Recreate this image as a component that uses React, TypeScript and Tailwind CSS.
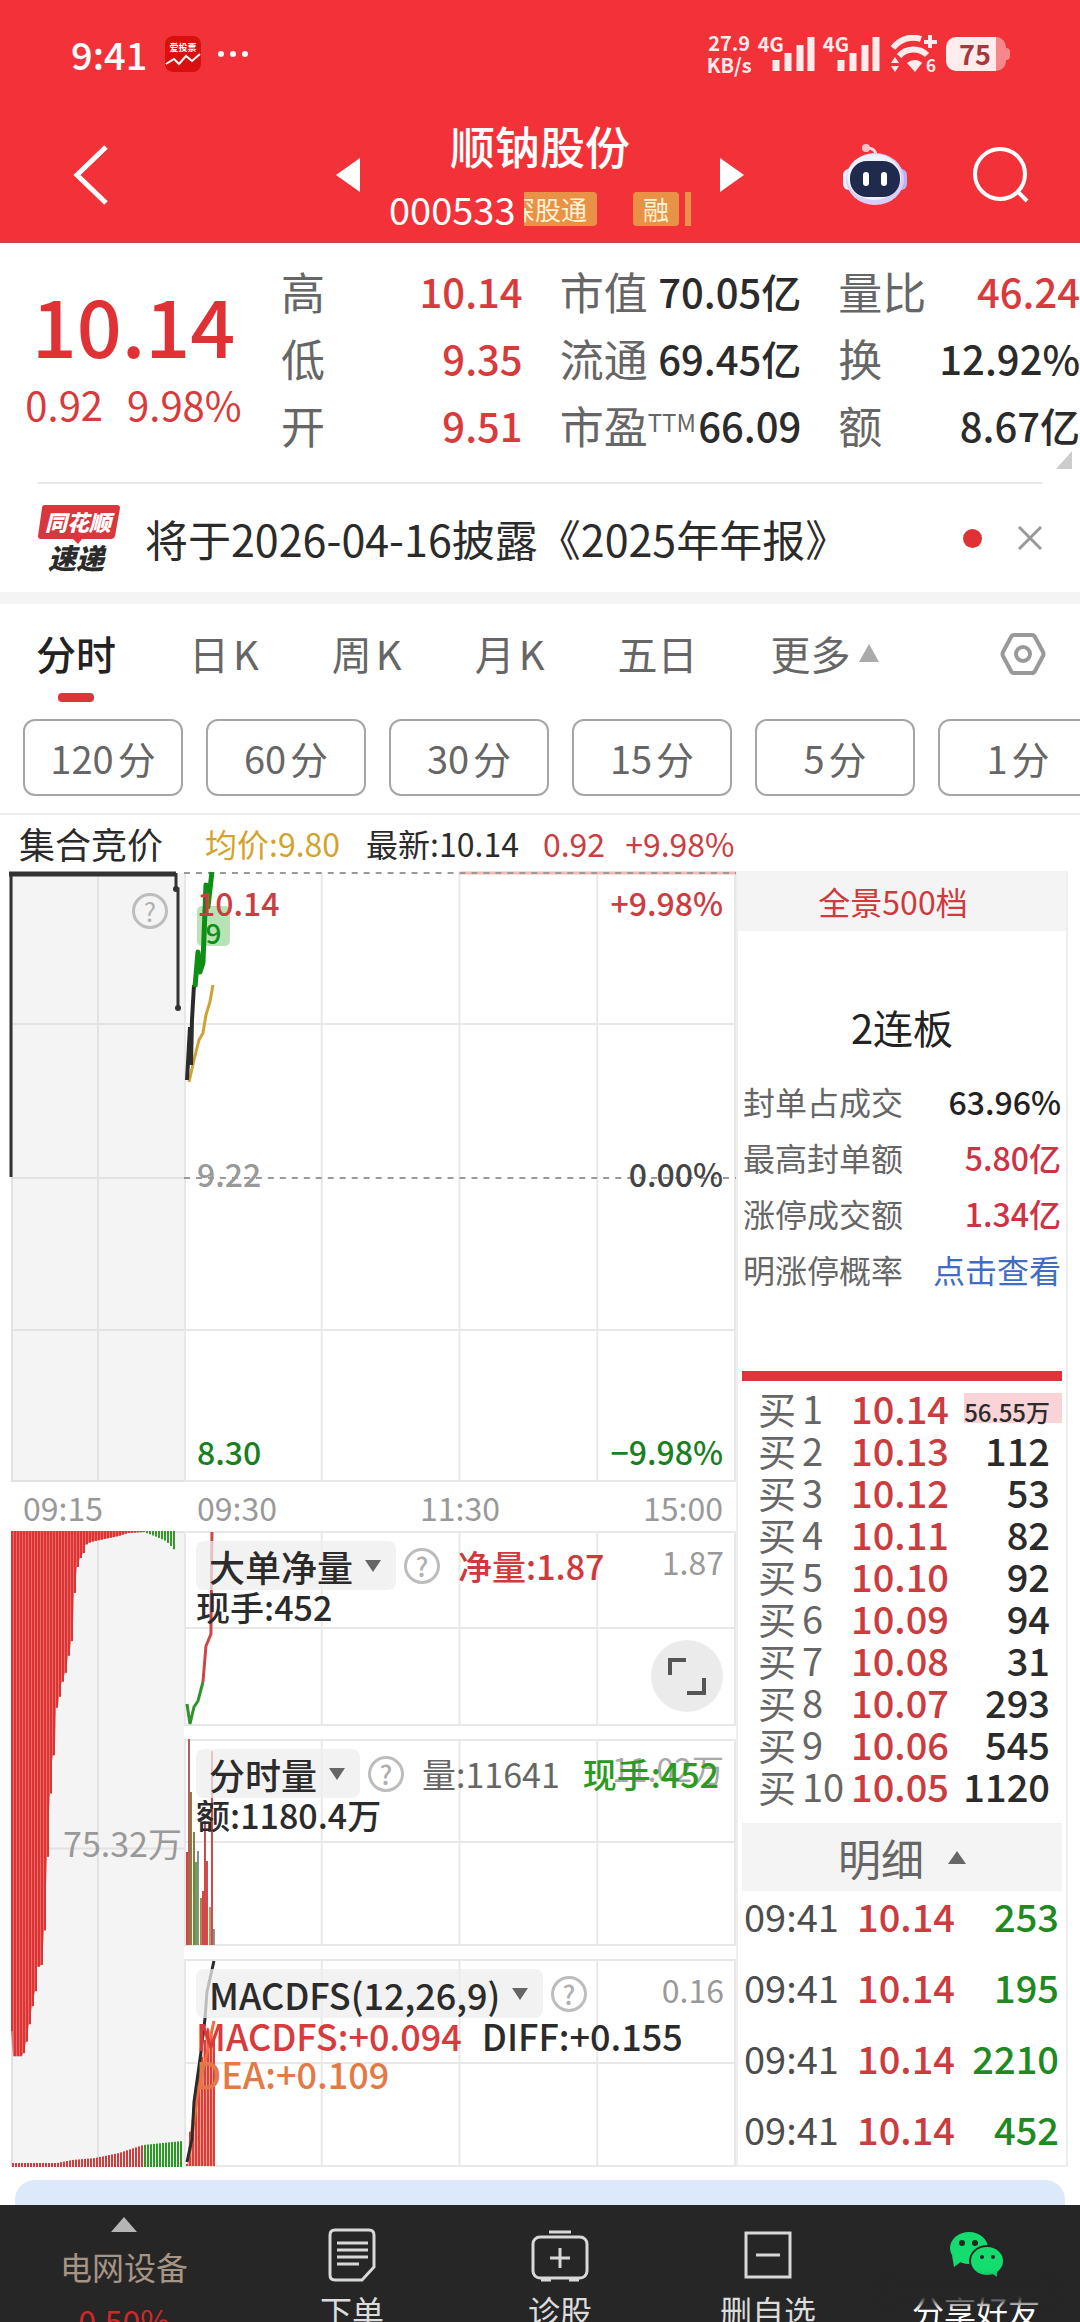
import React from 'react';

type Point = [number, number];

const stats = [
  [
    { label: '高', value: '10.14', color: 'text-[#d93a3c]' },
    { label: '低', value: '9.35', color: 'text-[#d93a3c]' },
    { label: '开', value: '9.51', color: 'text-[#d93a3c]' },
  ],
  [
    { label: '市值', value: '70.05亿', color: 'text-[#2b2b2b]' },
    { label: '流通', value: '69.45亿', color: 'text-[#2b2b2b]' },
    { label: '市盈', sup: 'TTM', value: '66.09', color: 'text-[#2b2b2b]' },
  ],
  [
    { label: '量比', value: '46.24', color: 'text-[#d93a3c]' },
    { label: '换', value: '12.92%', color: 'text-[#2b2b2b]' },
    { label: '额', value: '8.67亿', color: 'text-[#2b2b2b]' },
  ],
];

const periods = ['120', '60', '30', '15', '5', '1'];

const limitUp = [
  { label: '封单占成交', value: '63.96%', color: 'text-[#222222]' },
  { label: '最高封单额', value: '5.80亿', color: 'text-[#cf3244]' },
  { label: '涨停成交额', value: '1.34亿', color: 'text-[#cf3244]' },
];

const bids = [
  ['1', '10.14', '56.55万'],
  ['2', '10.13', '112'],
  ['3', '10.12', '53'],
  ['4', '10.11', '82'],
  ['5', '10.10', '92'],
  ['6', '10.09', '94'],
  ['7', '10.08', '31'],
  ['8', '10.07', '293'],
  ['9', '10.06', '545'],
  ['10', '10.05', '1120'],
];

const trades = [
  ['09:41', '10.14', '253'],
  ['09:41', '10.14', '195'],
  ['09:41', '10.14', '2210'],
  ['09:41', '10.14', '452'],
];

// x offset -> bar depth, hanging from the top of the auction panel
const auctionProfile: Point[] = [
  [0, 501], [2, 526], [11, 526], [14, 517], [16, 506], [20, 482], [22, 470], [24, 461], [26, 437],
  [31, 434], [34, 383], [37, 298], [39, 263], [41, 230], [44, 214], [45, 177], [47, 175], [49, 157],
  [52, 148], [55, 139], [57, 125], [59, 119], [62, 93], [63, 62], [66, 36], [69, 27], [72, 22],
  [74, 14], [79, 11], [93, 8], [107, 5], [116, 2], [132, 1], [145, 6], [154, 10], [161, 17], [164, 21],
];

const auctionVolume: Point[] = [
  [0, 4], [45, 4], [60, 7], [83, 9], [107, 14], [131, 22], [170, 26],
];

const minuteBars = [
  { x: 3, y: 113, c: '#d84444' },
  { x: 5, y: 0, c: '#b0605a' },
  { x: 7, y: 53, c: '#8f7a3c' },
  { x: 10, y: 93, c: '#8f7a3c' },
  { x: 12, y: 123, c: '#5aa84e' },
  { x: 14, y: 112, c: '#8d8d8d' },
  { x: 17, y: 159, c: '#a8864a' },
  { x: 19, y: 152, c: '#d84444' },
  { x: 21, y: 82, c: '#c94a4a' },
  { x: 23, y: 122, c: '#d84444' },
  { x: 26, y: 168, c: '#b79a5c' },
  { x: 28, y: 12, c: '#c94a4a' },
  { x: 30, y: 190, c: '#8d8d8d' },
];

const macdProfile: Point[] = [
  [3, 2], [5, 27], [10, 63], [14, 93], [19, 113], [23, 139], [30, 129],
];

const valueAt = (profile: Point[], x: number) => {
  const next = profile.findIndex(([px]) => px >= x);
  if (next <= 0) return profile[next === 0 ? 0 : profile.length - 1][1];
  const [x0, y0] = profile[next - 1];
  const [x1, y1] = profile[next];
  return y0 + ((y1 - y0) * (x - x0)) / (x1 - x0);
};

const range = (from: number, to: number, step: number) =>
  Array.from({ length: Math.floor((to - from) / step) + 1 }, (_, i) => from + i * step);

const HelpButton: React.FC = () => (
  <button
    aria-label="说明"
    className="flex h-9 w-9 shrink-0 items-center justify-center rounded-full border-[3px] border-[#bdbdbd] text-[26px] leading-none text-[#b0b0b0]"
  >
    ?
  </button>
);

const SignalBars: React.FC = () => (
  <div className="flex h-9 items-start">
    <span className="text-xl leading-4 font-bold">4G</span>
    <svg className="-ml-3 h-9 w-[43px]" viewBox="0 0 43 36" stroke="currentColor" strokeWidth="7">
      <path d="M4 24v11M16 17v18M28 9v26M39 1v34" />
    </svg>
  </div>
);

const StatusBar: React.FC = () => (
  <div className="flex h-[108px] items-center justify-between pr-[70px] pl-[71px]">
    <div className="flex items-center">
      <span className="text-[38px] leading-none font-medium">9:41</span>
      <svg className="ml-[18px] h-9 w-9" viewBox="0 0 36 36">
        <rect width="36" height="36" rx="8" fill="#d9100f" />
        <text x="18" y="15" fontSize="9" fontWeight="bold" textAnchor="middle" fill="#fff">爱投票</text>
        <path d="M1 28l8-5 5 5 7-8 6 5 8-7" fill="none" stroke="#fff" strokeWidth="2" />
      </svg>
      <svg className="ml-4 h-2 w-8" viewBox="0 0 32 8" fill="#fff">
        <circle cx="4" cy="4" r="3" />
        <circle cx="16" cy="4" r="3" />
        <circle cx="28" cy="4" r="3" />
      </svg>
    </div>
    <div className="flex items-center text-[#ffecec]">
      <div className="text-center text-xl leading-[22px] font-bold">
        27.9
        <br />
        KB/s
      </div>
      <div className="ml-[6px] flex gap-2">
        <SignalBars />
        <SignalBars />
      </div>
      <svg className="ml-[10px] h-[38px] w-[48px]" viewBox="0 0 48 38" fill="none" stroke="currentColor">
        <path d="M3 13C11 3 22 1 31 4M9 21C16 13 29 12 37 20" strokeWidth="6" />
        <path d="M17 28c5-4 11-4 15 0l-7 9z" fill="currentColor" stroke="none" />
        <path d="M34 7h13M40 0v13" strokeWidth="4" />
        <path d="M1 28l4-6 4 6zM1 31l4 6 4-6z" fill="currentColor" stroke="none" />
        <text x="36" y="37" fontSize="17" fontWeight="bold" fill="currentColor" stroke="none">6</text>
      </svg>
      <div className="ml-2 flex items-center">
        <span className="h-[34px] w-[50px] rounded-l-[10px] bg-[#ffecec] pl-2 text-center text-[27px] leading-[34px] font-bold text-[#a8373c]">
          75
        </span>
        <span className="h-[34px] w-[10px] rounded-r-[10px] bg-[#f8878b]" />
        <span className="h-3 w-1 rounded-r bg-[#f8878b]" />
      </div>
    </div>
  </div>
);

const Robot: React.FC = () => (
  <svg className="h-[62px] w-[66px]" viewBox="0 0 66 62">
    <path d="M34 12c0-5-3-8-8-8" fill="none" stroke="#ffd5da" strokeWidth="3" />
    <circle cx="24" cy="4" r="4" fill="#ffc2ca" />
    <rect x="1" y="25" width="12" height="21" rx="6" fill="#f0f2ff" />
    <rect x="53" y="25" width="12" height="21" rx="6" fill="#b9b4f0" />
    <ellipse cx="33" cy="35" rx="29" ry="26" fill="#d9cdfa" />
    <ellipse cx="32" cy="33" rx="27" ry="23" fill="#eef1ff" />
    <rect x="8" y="17" width="50" height="36" rx="17" fill="#202a4c" />
    <rect x="21" y="28" width="6" height="14" rx="3" fill="#fff" />
    <rect x="39" y="28" width="6" height="14" rx="3" fill="#fff" />
  </svg>
);

const Header: React.FC = () => (
  <header className="border-b-2 border-[#c8474a] bg-[#f23238] text-white">
    <StatusBar />
    <div className="grid h-[133px] grid-cols-[1fr_auto_1fr] items-center">
      <button aria-label="返回" className="justify-self-start pl-[72px]">
        <svg className="h-[60px] w-[38px]" viewBox="0 0 38 60" fill="none" stroke="#fff" strokeWidth="5">
          <path d="M34 2L5 30l29 28" />
        </svg>
      </button>
      <div className="flex w-[408px] items-center justify-between">
        <button aria-label="上一只">
          <svg className="h-[34px] w-6" viewBox="0 0 24 34" fill="#fff"><path d="M24 0v34L0 17z" /></svg>
        </button>
        <div className="w-[302px] pt-1">
          <h1 className="text-center text-[45px] leading-[64px] font-medium">顺钠股份</h1>
          <div className="flex h-[62px] items-center">
            <span className="text-[38px] leading-none">000533</span>
            <div className="ml-2 flex h-[34px] min-w-0 flex-1 justify-end overflow-hidden text-[26px] leading-[34px] whitespace-nowrap text-[#fff3d2]">
              <span className="shrink-0 rounded bg-[#ea9148] pr-[10px]">深股通</span>
              <span className="ml-9 shrink-0 rounded bg-[#ea9148] px-[10px]">融</span>
              <span className="ml-[6px] w-[6px] shrink-0 bg-[#ea9148]" />
            </div>
          </div>
        </div>
        <button aria-label="下一只">
          <svg className="h-[34px] w-6" viewBox="0 0 24 34" fill="#fff"><path d="M0 0v34l24-17z" /></svg>
        </button>
      </div>
      <div className="flex items-center gap-[65px] justify-self-end pr-[51px]">
        <button aria-label="智能助手"><Robot /></button>
        <button aria-label="搜索">
          <svg className="h-[56px] w-[56px]" viewBox="0 0 56 56" fill="none" stroke="#fff" strokeWidth="4">
            <circle cx="27" cy="27" r="25" />
            <path d="M44 44l10 10" />
          </svg>
        </button>
      </div>
    </div>
  </header>
);

const Quote: React.FC = () => (
  <section className="flex pt-[15px]">
    <div className="mr-[14px] w-[267px] shrink-0 text-center text-[#d93a3c]">
      <div className="pt-[13px] text-[79px] leading-[106px] font-medium text-[#e03135]">10.14</div>
      <div className="flex justify-center gap-6 text-[40px] leading-[54px]">
        <span>0.92</span>
        <span>9.98%</span>
      </div>
    </div>
    <div className="min-w-0 flex-1">
      <div className="grid grid-cols-3 gap-x-[37px] text-[40px] leading-[67px]">
        {stats.map((column, i) => (
          <dl key={i}>
            {column.map((item) => (
              <div key={item.label} className="flex justify-between whitespace-nowrap">
                <dt className="text-[44px] text-[#666666]">
                  {item.label}
                  {item.sup && <sup className="text-[24px]">{item.sup}</sup>}
                </dt>
                <dd className={`font-medium ${item.color}`}>{item.value}</dd>
              </div>
            ))}
          </dl>
        ))}
      </div>
      <svg className="mr-2 mb-[13px] ml-auto -mt-2 h-[18px] w-4" viewBox="0 0 16 18" fill="#cccccc">
        <path d="M16 0v18H0z" />
      </svg>
    </div>
  </section>
);

const Notice: React.FC = () => (
  <section className="mx-[38px] flex h-[110px] items-center border-t-2 border-[#e8e8e8]">
    <svg className="h-[68px] w-[82px]" viewBox="0 0 82 68">
      <path d="M7 1h72q3 0 3 3l-5 28q-1 3-4 3H44l-4 5-5-5H3q-3 0-3-3L4 4q0-3 3-3z" fill="#d8383d" />
      <text x="40" y="27" fontSize="22" fontWeight="900" fontStyle="italic" textAnchor="middle" fill="#fff">同花顺</text>
      <text x="38" y="65" fontSize="28" fontWeight="900" fontStyle="italic" textAnchor="middle" fill="#2b2b2b">速递</text>
    </svg>
    <a href="#report" className="ml-[25px] flex-1 text-[43px] leading-none whitespace-nowrap text-[#2b2b2b]">
      将于2026-04-16披露《2025年年报》
    </a>
    <span className="h-[19px] w-[19px] rounded-full bg-[#e03135]" />
    <button aria-label="关闭" className="ml-9">
      <svg className="h-6 w-6" viewBox="0 0 24 24" stroke="#999999" strokeWidth="3"><path d="M1 1l22 22M23 1L1 23" /></svg>
    </button>
  </section>
);

const Tabs: React.FC = () => (
  <nav className="flex h-[118px] items-start gap-[73px] border-t-[12px] border-[#f4f4f4] pt-5 pr-[34px] pl-[36px] text-[40px] leading-[58px] whitespace-nowrap text-[#666666]">
    <button className="flex flex-col items-center font-medium text-[#222222]">
      分时
      <span className="mt-[11px] h-[9px] w-9 rounded bg-[#dd3539]" />
    </button>
    {['日', '周', '月'].map((unit) => (
      <button key={unit}>
        {unit}
        <span className="ml-1">K</span>
      </button>
    ))}
    <button>五日</button>
    <button className="flex items-center gap-2">
      更多
      <svg className="h-[18px] w-5" viewBox="0 0 20 18" fill="#aaaaaa"><path d="M10 0l10 18H0z" /></svg>
    </button>
    <button aria-label="设置" className="mt-2 ml-auto">
      <svg className="h-[44px] w-[46px]" viewBox="0 0 46 44" fill="none" stroke="#999999" strokeWidth="4" strokeLinejoin="round">
        <path d="M14 3h18q2 0 3 2l8 15q1 2 0 4l-8 15q-1 2-3 2H14q-2 0-3-2L3 24q-1-2 0-4l8-15q1-2 3-2z" />
        <circle cx="23" cy="22" r="7" />
      </svg>
    </button>
  </nav>
);

const Periods: React.FC = () => (
  <div className="flex gap-[23px] overflow-hidden border-b-2 border-[#eeeeee] pt-[9px] pb-[17px] pl-[23px]">
    {periods.map((minutes) => (
      <button key={minutes} className="h-[77px] w-40 shrink-0 rounded-xl border-2 border-[#a6a6a6] text-[38px] leading-none text-[#666666]">
        {minutes}
        <span className="ml-1">分</span>
      </button>
    ))}
  </div>
);

const Grid: React.FC<{ height: number; rows: number[] }> = ({ height, rows }) => (
  <g stroke="#e8e8e8" strokeWidth="2">
    {[138, 276, 414, 552].map((x) => (
      <line key={x} x1={x} x2={x} y1="0" y2={height} />
    ))}
    {rows.map((y) => (
      <line key={y} x1="0" x2="553" y1={y} y2={y} />
    ))}
    <line x1="1" x2="1" y1="0" y2={height} />
  </g>
);

const AuctionPrice: React.FC = () => (
  <div className="relative h-[609px] w-[173px] shrink-0">
    <svg className="absolute inset-0 h-full w-full overflow-visible" viewBox="0 0 173 609" preserveAspectRatio="none">
      <rect width="173" height="609" fill="#f4f4f4" />
      <path d="M87 0v609M0 151h173M0 305h173M0 457h173M1 0v609M0 608h173" stroke="#e2e2e2" strokeWidth="2" />
      <path d="M0 304V0" stroke="#333333" strokeWidth="3" />
      <path d="M-2 1h167" stroke="#333333" strokeWidth="5" />
      <path d="M165 0v16h2v119" fill="none" stroke="#333333" strokeWidth="3" />
      <circle cx="165" cy="16" r="3" fill="#333333" />
      <circle cx="167" cy="135" r="3" fill="#333333" />
    </svg>
    <div className="relative flex justify-end pt-5 pr-[16px]">
      <HelpButton />
    </div>
  </div>
);

const PriceChart: React.FC = () => (
  <div className="relative h-[609px] flex-1">
    <svg className="absolute inset-0 h-full w-full overflow-visible" viewBox="0 0 553 609" preserveAspectRatio="none">
      <Grid height={609} rows={[151, 457, 608]} />
      <path d="M276 0h277" stroke="#f3b9b3" strokeWidth="3" />
      <path d="M0 0h553M0 305h553" stroke="#9a9a9a" strokeWidth="2" strokeDasharray="6 6" />
      <rect x="13" y="33" width="33" height="40" rx="5" fill="#b9e2b6" />
      <path d="M5 209l5-22 5-20 4-7 3-18 4-13 3-17" fill="none" stroke="#cfa233" strokeWidth="3" />
      <path d="M3 207l3-53 1 38 1-45 2-35" fill="none" stroke="#2b2b2b" strokeWidth="4" />
      <path d="M11 114l3-35 2 20 3-9 3-78 2 22 4-35" fill="none" stroke="#0d8f14" strokeWidth="5" strokeLinejoin="round" />
    </svg>
    <div className="relative flex h-full flex-col justify-between px-[13px] text-[32px] leading-[40px] font-medium">
      <div className="flex justify-between pt-[9px] text-[#cc3d3f]">
        <div>
          10.14
          <div className="w-[33px] text-center text-[28px] leading-[20px] text-[#0d8f14]">9</div>
        </div>
        <span>+9.98%</span>
      </div>
      <div className="flex justify-between text-[#999999]">
        <span>9.22</span>
        <span className="text-[#444444]">0.00%</span>
      </div>
      <div className="flex justify-between pt-7 pb-[11px] text-[#1a7f1f]">
        <span>8.30</span>
        <span>−9.98%</span>
      </div>
    </div>
  </div>
);

const AuctionVolume: React.FC = () => (
  <div className="relative w-[173px] shrink-0">
    <svg className="absolute inset-0 h-full w-full" viewBox="0 0 173 637" preserveAspectRatio="none">
      <rect width="173" height="637" fill="#f4f4f4" />
      <path d="M87 0v637M0 318h173M1 0v637M0 1h173" stroke="#e2e2e2" strokeWidth="2" />
      <path d={`M0 0${auctionProfile.slice(0, 33).map(([x, y]) => `L${x} ${y}`).join('')}V0z`} fill="#e86a6a" />
      {range(0, 164, 3).map((x) => (
        <rect key={x} x={x} y="0" width="2" height={valueAt(auctionProfile, x)} fill={x > 132 ? '#359a2a' : '#dc3333'} />
      ))}
      {range(1, 169, 3).map((x) => (
        <rect
          key={x}
          x={x}
          y={637 - valueAt(auctionVolume, x)}
          width="2"
          height={valueAt(auctionVolume, x)}
          fill={x > 130 ? '#2a9a22' : '#d23c3c'}
        />
      ))}
    </svg>
    <div className="relative flex h-full items-center justify-end pr-[2px] pb-[12px] text-[34px] leading-[40px] text-[#999999]">75.32万</div>
  </div>
);

interface IndicatorProps {
  name: string;
  limit?: React.ReactNode;
  values?: React.ReactNode;
  children: React.ReactNode;
}

const Indicator: React.FC<IndicatorProps> = ({ name, limit, values, children }) => (
  <div className="relative px-[12px] pt-[10px] font-medium">
    <div className="flex h-[49px] items-center">
      <label className="relative flex h-[49px] items-center rounded-lg bg-[#ededed]/75 text-[#2b2b2b]">
        <select aria-label="指标" className="h-full appearance-none pr-[42px] pl-[13px] text-[36px] leading-[48px]">
          <option>{name}</option>
        </select>
        <svg className="pointer-events-none absolute right-[15px] h-3 w-4" viewBox="0 0 16 12" fill="#666666">
          <path d="M0 0h16L8 12z" />
        </svg>
      </label>
      <div className="ml-2">
        <HelpButton />
      </div>
      {values}
      {limit}
    </div>
    {children}
  </div>
);

const LargeOrders: React.FC = () => (
  <div className="relative h-[195px]">
    <svg className="absolute inset-0 h-full w-full overflow-visible" viewBox="0 0 553 195" preserveAspectRatio="none">
      <Grid height={195} rows={[1, 97, 194]} />
      <path d="M3 173l3 20 4-17 4-6 5-19" fill="none" stroke="#2f9329" strokeWidth="3" />
      <path d="M19 151l3-36 5-12 1-102" fill="none" stroke="#cf4545" strokeWidth="3" />
    </svg>
    <Indicator
      name="大单净量"
      values={<span className="ml-[18px] text-[34px] leading-none text-[#d0383b]">净量:1.87</span>}
      limit={<span className="ml-auto self-start text-[32px] leading-[40px] font-normal text-[#999999]">1.87</span>}
    >
      <div className="text-[34px] leading-[34px] text-[#2b2b2b]">现手:452</div>
    </Indicator>
    <button aria-label="全屏" className="absolute right-[13px] bottom-[14px] flex h-[72px] w-[72px] items-center justify-center rounded-full bg-[#ebebeb]">
      <svg className="h-10 w-10" viewBox="0 0 40 40" fill="none" stroke="#555555" strokeWidth="4">
        <path d="M3 19V4h16M37 22v15H20" />
      </svg>
    </button>
  </div>
);

const MinuteVolume: React.FC = () => (
  <div className="relative h-[207px]">
    <svg className="absolute inset-0 h-full w-full" viewBox="0 0 553 207" preserveAspectRatio="none">
      <Grid height={207} rows={[1, 103, 206]} />
      {minuteBars.map((bar) => (
        <rect key={bar.x} x={bar.x - 1} y={bar.y} width="2" height={206 - bar.y} fill={bar.c} />
      ))}
    </svg>
    <Indicator
      name="分时量"
      values={<span className="ml-[18px] text-[34px] leading-none font-normal text-[#666666]">量:11641</span>}
      limit={
        <span className="relative ml-auto pr-[5px] text-[34px] leading-none text-[#2b9a1f]">
          <span className="absolute right-0 bottom-[7px] text-[32px] font-normal text-[#a8a8a8]">11.02万</span>
          <span className="relative">现手:452</span>
        </span>
      }
    >
      <div className="text-[34px] leading-[34px] text-[#2b2b2b]">额:1180.4万</div>
    </Indicator>
  </div>
);

const Macd: React.FC = () => (
  <div className="relative h-[208px]">
    <svg className="absolute inset-0 h-full w-full" viewBox="0 0 553 208" preserveAspectRatio="none">
      <Grid height={208} rows={[1, 104, 207]} />
      <path d="M3 207l2-27 5-36 4-30 5-20 4-26 8 10v129z" fill="#f7a58f" />
      {range(3, 30, 3).map((x) => (
        <rect key={x} x={x - 1} y={207 - valueAt(macdProfile, x)} width="2" height={valueAt(macdProfile, x)} fill="#dc3b3b" />
      ))}
      <path d="M5 198l9-65 10-43 6-28" fill="none" stroke="#f26a3a" strokeWidth="3" />
      <path d="M3 203l5-23 2-37 7-50 4-33 2-27 7-31" fill="none" stroke="#2b2b2b" strokeWidth="3" />
    </svg>
    <Indicator
      name="MACDFS(12,26,9)"
      limit={<span className="ml-auto self-start text-[32px] leading-[40px] font-normal text-[#999999]">0.16</span>}
    >
      <div className="flex gap-5 text-[36px] leading-[34px] whitespace-nowrap">
        <span className="text-[#d93a3c]">MACDFS:+0.094</span>
        <span className="text-[#2b2b2b]">DIFF:+0.155</span>
      </div>
      <div className="text-[36px] leading-[42px] text-[#e37a45]">DEA:+0.109</div>
    </Indicator>
  </div>
);

const OrderPanel: React.FC = () => (
  <aside className="mr-3 w-[332px] shrink-0 border-x-2 border-b-2 border-[#eeeeee]">
    <button className="flex h-[60px] w-full items-center justify-center bg-[#f4f4f4] pr-[18px] text-[32px] leading-none text-[#cf3a3c]">
      全景500档
    </button>
    <h2 className="pt-[66px] text-center text-[40px] leading-[60px] text-[#222222]">2连板</h2>
    <dl className="px-[5px] pt-[16px] text-[32px] leading-[56px] text-[#666666]">
      {limitUp.map((row) => (
        <div key={row.label} className="flex justify-between">
          <dt>{row.label}</dt>
          <dd className={`font-medium ${row.color}`}>{row.value}</dd>
        </div>
      ))}
      <div className="flex justify-between">
        <dt>明涨停概率</dt>
        <dd><a href="#odds" className="text-[#3f6cc4]">点击查看</a></dd>
      </div>
    </dl>
    <div className="mx-1 mt-[74px] h-[10px] bg-[#dd3539]" />
    <table className="mx-1 mt-[6px] w-[320px] text-[38px] leading-[42px] whitespace-nowrap">
      <tbody>
        {bids.map(([level, price, amount], i) => (
          <tr key={level}>
            <th scope="row" className="h-[42px] w-[109px] p-0 pl-4 text-left font-normal text-[#666666]">
              买<span className="ml-[6px]">{level}</span>
            </th>
            <td className="p-0 font-medium text-[#cc3b3d]">{price}</td>
            <td className="p-0 text-right font-medium text-[#2b2b2b]">
              {i === 0 ? (
                <span className="ml-auto block h-[30px] w-[98px] bg-[#f9d3d5] pr-3 text-[24px] leading-[38px]">{amount}</span>
              ) : (
                <span className="pr-3">{amount}</span>
              )}
            </td>
          </tr>
        ))}
      </tbody>
    </table>
    <button className="mx-1 mt-[16px] flex h-[68px] w-[320px] items-center justify-center gap-6 bg-[#f4f4f4] text-[43px] leading-none text-[#666666]">
      明细
      <svg className="h-[13px] w-[18px]" viewBox="0 0 18 13" fill="#666666"><path d="M9 0l9 13H0z" /></svg>
    </button>
    <table className="mx-1 w-[320px] text-[38px] leading-[50px]">
      <tbody>
        {trades.map(([time, price, amount], i) => (
          <tr key={i} className="h-[71px] align-top last:h-[60px]">
            <td className="w-[115px] p-0 pl-[2px] text-[#4d4d4d]">{time}</td>
            <td className="p-0 font-medium text-[#cc3b3d]">{price}</td>
            <td className="p-0 pr-[3px] text-right font-medium text-[#1f8a22]">{amount}</td>
          </tr>
        ))}
      </tbody>
    </table>
  </aside>
);

const Charts: React.FC = () => (
  <main>
    <div className="flex h-[56px] items-center pl-[19px] text-[32px] leading-none whitespace-nowrap">
      <span className="text-[36px] text-[#2b2b2b]">集合竞价</span>
      <span className="ml-[42px] text-[#d3a32c]">均价:9.80</span>
      <span className="ml-[26px] text-[#2b2b2b]">最新:10.14</span>
      <span className="ml-6 text-[#cc3d3f]">0.92</span>
      <span className="ml-5 text-[#cc3d3f]">+9.98%</span>
    </div>
    <div className="flex">
      <div className="flex min-w-0 flex-1 flex-col pt-[2px] pl-[11px]">
        <div className="flex">
          <AuctionPrice />
          <PriceChart />
        </div>
        <div className="flex h-[49px] items-center text-[32px] leading-none text-[#999999]">
          <span className="w-[186px] shrink-0 pl-3">09:15</span>
          <div className="flex flex-1 justify-between pr-[13px]">
            <span>09:30</span>
            <span>11:30</span>
            <span>15:00</span>
          </div>
        </div>
        <div className="flex">
          <AuctionVolume />
          <div className="flex min-w-0 flex-1 flex-col gap-[13px]">
            <LargeOrders />
            <MinuteVolume />
            <Macd />
          </div>
        </div>
      </div>
      <OrderPanel />
    </div>
  </main>
);

const BottomBar: React.FC = () => (
  <footer className="flex bg-[#262626] text-[32px] leading-[40px] text-[#dcdcdc]">
    <button className="flex w-[248px] shrink-0 flex-col items-center pt-3 text-[#a69485]">
      <svg className="h-[15px] w-[26px]" viewBox="0 0 26 15" fill="#b5b5b5"><path d="M13 0l13 15H0z" /></svg>
      <span className="pt-[14px]">电网设备</span>
      <span className="pt-[14px] text-[#d3262a]">0.50%</span>
    </button>
    <button className="flex flex-1 flex-col items-center pt-[23px]">
      <svg className="h-[54px] w-12" viewBox="0 0 48 54" fill="none" stroke="#d8d8d8" strokeWidth="3">
        <path d="M7 2h34q5 0 5 5v32L34 52H7q-5 0-5-5V7q0-5 5-5z" />
        <path d="M9 15h31M9 22h31M9 29h31M9 36h22" />
      </svg>
      <span className="pt-2">下单</span>
    </button>
    <button className="flex flex-1 flex-col items-center pt-[25px]">
      <svg className="h-[52px] w-[58px]" viewBox="0 0 58 52" fill="none" stroke="#d8d8d8" strokeWidth="3">
        <rect x="2" y="7" width="54" height="41" rx="7" />
        <path d="M18 2h22M29 18v20M19 28h20M10 50h10M38 50h10" />
      </svg>
      <span className="pt-2">诊股</span>
    </button>
    <button className="flex flex-1 flex-col items-center pt-[26px]">
      <svg className="h-[48px] w-[48px]" viewBox="0 0 48 48" fill="none" stroke="#d8d8d8" strokeWidth="3">
        <rect x="2" y="2" width="44" height="44" />
        <path d="M12 24h24" />
      </svg>
      <span className="pt-[11px]">删自选</span>
    </button>
    <button className="relative flex flex-1 flex-col items-center pt-[26px]">
      <svg className="h-[46px] w-[54px]" viewBox="0 0 54 46">
        <path d="M3 24l2 12 8-6z" fill="#15dc6e" />
        <ellipse cx="20" cy="17" rx="19" ry="16" fill="#15dc6e" />
        <ellipse cx="38" cy="30" rx="18" ry="16" fill="#262626" />
        <ellipse cx="38" cy="30" rx="16" ry="14" fill="#15dc6e" />
        <path d="M42 42l6 4 0-8z" fill="#15dc6e" />
        <g fill="#262626">
          <circle cx="13" cy="12" r="3" />
          <circle cx="26" cy="12" r="3" />
          <circle cx="33" cy="26" r="2" />
          <circle cx="44" cy="26" r="2" />
        </g>
      </svg>
      <span className="pt-[13px] text-white">分享好友</span>
      <span className="absolute top-[74px] left-2 h-6 w-44 rounded-full bg-[#262626] blur-[4px]" />
    </button>
  </footer>
);

const App: React.FC = () => (
  <div className="h-screen overflow-hidden bg-white font-['Noto_Sans_CJK_SC',sans-serif]">
    <Header />
    <Quote />
    <Notice />
    <Tabs />
    <Periods />
    <Charts />
    <div className="mx-[15px] mt-[13px] h-[25px] rounded-t-[20px] bg-[#dbe9fb]" />
    <BottomBar />
  </div>
);

export default App;
